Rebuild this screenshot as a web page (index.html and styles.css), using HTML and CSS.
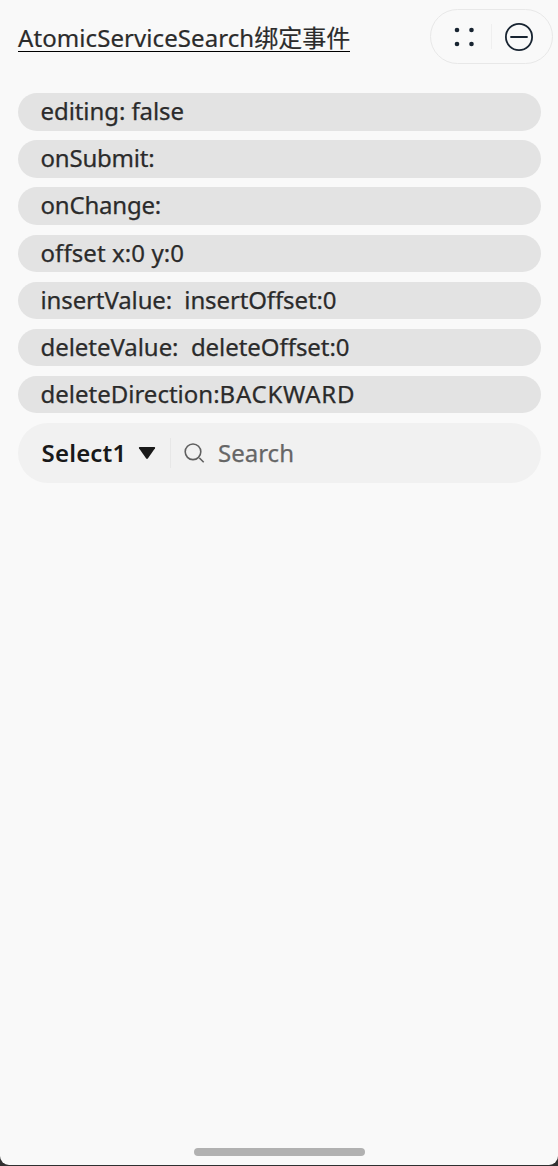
FILE: index.html
```html
<!DOCTYPE html>
<html lang="zh-CN">
<head>
<meta charset="utf-8">
<title>AtomicServiceSearch</title>
<link rel="stylesheet" href="styles.css">
</head>
<body>
<div class="screen">
  <header class="header">
    <h1 class="title"><span class="title-latin">AtomicServiceSearch</span>绑定事件</h1>
    <div class="capsule">
      <svg class="capsule-icon" width="28" height="28" viewBox="0 0 28 28" fill="#182431"><circle cx="7" cy="7" r="2.3"/><circle cx="21.5" cy="7" r="2.3"/><circle cx="7" cy="21" r="2.3"/><circle cx="21.5" cy="21" r="2.3"/></svg>
      <span class="capsule-divider"></span>
      <svg class="capsule-icon" width="30" height="30" viewBox="0 0 30 30" fill="none" stroke="#182431" stroke-width="1.8" stroke-linecap="round"><circle cx="15" cy="15" r="13.1"/><path d="M7 15h16"/></svg>
    </div>
  </header>
  <main class="content">
    <div class="row editing">editing: false</div>
    <div class="row submit">onSubmit:</div>
    <div class="row change">onChange:</div>
    <div class="row offset">offset x:0 y:0</div>
    <div class="row insert">insertValue:&nbsp; insertOffset:0</div>
    <div class="row delete">deleteValue:&nbsp; deleteOffset:0</div>
    <div class="row direction"><span>deleteDirection:</span><span class="direction-value">BACKWARD</span></div>
    <div class="search">
      <span class="select">Select1</span>
      <svg class="arrow" width="18" height="14" viewBox="0 0 18 14"><path d="M1.5 1h15q1 .2.5 1.3L10 12.3q-1 1.2-2 0L1 2.3Q.5 1.2 1.5 1z" fill="#191919"/></svg>
      <span class="search-divider"></span>
      <svg class="glass" width="22" height="22" viewBox="0 0 22 22" fill="none" stroke="#606060" stroke-width="1.6"><circle cx="9" cy="9.8" r="7.8"/><path d="M15.4 16l4.3 4.3"/></svg>
      <span class="placeholder">Search</span>
    </div>
  </main>
  <div class="home-bar"></div>
</div>
</body>
</html>
```
FILE: styles.css
```css
* { box-sizing: border-box; }
body { margin: 0; background: #303030; font-family: "Noto Sans", "Noto Sans CJK SC", sans-serif; color: #2b2b2b; }
.screen { display: flex; flex-direction: column; width: 558px; height: 1165px; background: #f9f9f9; border-radius: 0 0 9px 9px; }
.header { display: flex; justify-content: space-between; align-items: flex-start; height: 93px; padding: 9px 5px 0 18px; }
.title { margin: 12px 0 0; height: 31px; line-height: 34px; font-size: 24px; font-weight: 400; white-space: nowrap; border-bottom: 1px solid #000; -webkit-text-stroke: 0.2px; }
.title-latin { letter-spacing: 0.08px; }
.capsule { display: flex; align-items: center; width: 123px; height: 55px; padding: 0 0 0 19px; border: 1px solid #e8e8e8; border-radius: 28px; }
.capsule-icon { flex: none; }
.capsule-divider { width: 1px; height: 25px; margin: 0 12px 0 13px; background: #efefef; }
.content { display: flex; flex-direction: column; gap: 9.5px; padding: 0.3px 17px 0 18px; }
.row { display: flex; align-items: center; height: 37.6px; padding: 0 22.5px 1.6px; border-radius: 19px; background: #e3e3e3; font-size: 24px; line-height: 36px; white-space: nowrap; -webkit-text-stroke: 0.25px; }
.editing { letter-spacing: -0.08px; }
.submit, .change { letter-spacing: -0.2px; }
.offset { letter-spacing: 0.08px; }
.insert { letter-spacing: -0.12px; }
.delete { letter-spacing: -0.05px; }
.direction-value { letter-spacing: 0.75px; }
.search { display: flex; align-items: center; height: 60px; padding-left: 23.5px; border-radius: 30px; background: #f1f1f1; font-size: 24px; white-space: nowrap; }
.select { width: 96.5px; color: #191919; font-weight: 600; letter-spacing: 0.2px; }
.search-divider { width: 1px; height: 30px; margin: 0 13px 0 14px; background: #e7e7e7; }
.placeholder { margin-left: 12px; color: #666; -webkit-text-stroke: 0.25px; }
.home-bar { width: 171px; height: 8px; margin: auto auto 9px; border-radius: 4px; background: #b1b1b1; }
```
